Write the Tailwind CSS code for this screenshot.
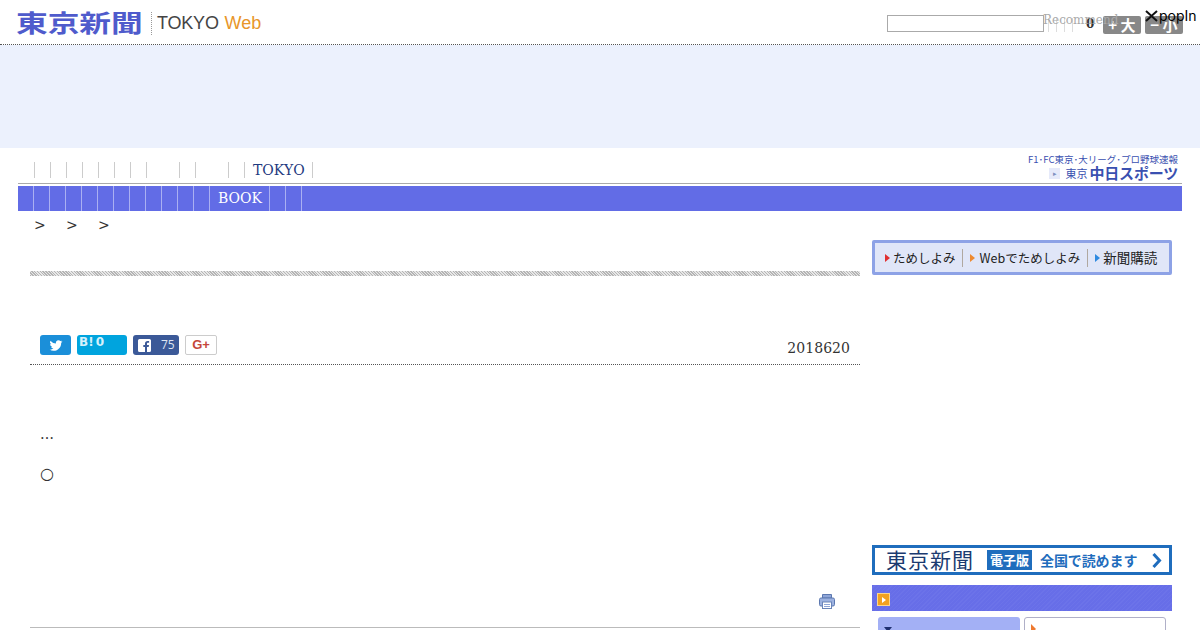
<!DOCTYPE html>
<html lang="ja">
<head>
<meta charset="UTF-8" />
<title>東京新聞 TOKYO Web</title>
<script src="https://cdn.jsdelivr.net/npm/@tailwindcss/browser@4"></script>
</head>
<body class="relative h-[630px] w-[1200px] overflow-hidden bg-white font-['DejaVu_Serif','Noto_Sans_CJK_JP',serif] text-sm text-[#333]">

<!-- Header -->
<header class="flex h-[45px] items-start border-b border-dotted border-[#555] pl-4">
  <div class="mt-[7px] w-[127px] shrink-0 origin-left scale-x-[1.32] whitespace-nowrap font-['Noto_Sans_CJK_JP',sans-serif] text-[24px] font-bold leading-[30px] text-[#4f5bcc]">東京新聞</div>
  <div class="mt-[12px] ml-2 h-[23px] border-l border-dotted border-[#999]"></div>
  <div class="mt-[11px] ml-[5px] whitespace-nowrap font-['Liberation_Sans',sans-serif] text-[18px] leading-[24px] tracking-[-0.2px] text-[#444]">TOKYO <span class="ml-[1px] tracking-[0px] text-[#e8962a]">Web</span></div>
  <div class="ml-auto mt-[15px] mr-[17px] flex items-start">
    <div class="h-[17px] w-[157px] border border-[#aaa] bg-white"></div>
    <div class="ml-[4px] mt-[3px] flex h-[14px] w-[37px] gap-[7px]">
      <i class="border-l border-[#ddd]"></i><i class="border-l border-[#ddd]"></i><i class="border-l border-[#ddd]"></i><i class="border-l border-[#ddd]"></i>
    </div>
    <div class="ml-[1px] mt-[1px] w-[17px] text-[12px] font-bold leading-[16px] text-[#333]">0</div>
    <div class="mt-[1px] flex h-[18px] w-[38px] items-center justify-center rounded-[2px] bg-[#888] font-['Noto_Sans_CJK_JP',sans-serif] text-[15px] font-bold text-white">+ 大</div>
    <div class="ml-1 mt-[1px] flex h-[18px] w-[38px] items-center justify-center rounded-[2px] bg-[#888] font-['Noto_Sans_CJK_JP',sans-serif] text-[15px] font-bold text-white">− 小</div>
  </div>
</header>

<!-- overlays from the recommend widget -->
<div class="absolute left-[1043px] top-[13px] text-[12px] leading-[15px] text-[#aaa]">Recommend</div>
<div class="absolute left-[1145px] top-[7px] flex items-center gap-[1px] font-['Inter',sans-serif] text-[14px] leading-[17px] text-black">
  <svg class="h-[12px] w-[13px]" viewBox="0 0 13 12" fill="none" stroke="#111" stroke-width="2"><path d="M1 1l5.500 5 5.500-5M1 11l5.500-5 5.500 5" /></svg>
  <span>popIn</span>
</div>

<!-- Ad band -->
<div class="h-[103px] bg-[#ecf1fd]"></div>

<!-- Global nav -->
<div class="ml-[18px] mr-[18px]">
  <div class="flex h-[36px] items-start justify-between border-b border-[#aaa]">
    <ul class="mt-[14px] ml-[16px] flex h-[16px] border-r border-[#ccc] text-[#1f3a80]">
      <li class="w-[16px] border-l border-[#ccc]"></li>
      <li class="w-[16px] border-l border-[#ccc]"></li>
      <li class="w-[16px] border-l border-[#ccc]"></li>
      <li class="w-[16px] border-l border-[#ccc]"></li>
      <li class="w-[16px] border-l border-[#ccc]"></li>
      <li class="w-[16px] border-l border-[#ccc]"></li>
      <li class="w-[16px] border-l border-[#ccc]"></li>
      <li class="w-[33px] border-l border-[#ccc]"></li>
      <li class="w-[16px] border-l border-[#ccc]"></li>
      <li class="w-[33px] border-l border-[#ccc]"></li>
      <li class="w-[16px] border-l border-[#ccc]"></li>
      <li class="w-[68px] border-l border-[#ccc] pl-[8px] leading-[16px]">TOKYO</li>
    </ul>
    <div class="mr-[4px] mt-[5px] flex flex-col items-end font-['Noto_Sans_CJK_JP',sans-serif] text-[#3a50b0]">
      <div class="whitespace-nowrap text-[9.500px] leading-[13px]">F1･FC東京･大リーグ･プロ野球速報</div>
      <div class="flex items-center whitespace-nowrap leading-[14px]">
        <span class="mr-[5px] flex h-[11px] w-[11px] items-center justify-center bg-[#e6eafa] text-[7px] text-[#8090c0]">▸</span>
        <span class="mr-[2px] text-[11px]">東京</span>
        <span class="text-[15px] font-bold tracking-[-0.2px]">中日スポーツ</span>
      </div>
    </div>
  </div>
  <ul class="mt-[2px] flex h-[25px] bg-[#626ce6] pl-[15px] text-white">
    <li class="w-[16px] border-l border-[#aab0f2]"></li>
    <li class="w-[16px] border-l border-[#aab0f2]"></li>
    <li class="w-[16px] border-l border-[#aab0f2]"></li>
    <li class="w-[16px] border-l border-[#aab0f2]"></li>
    <li class="w-[16px] border-l border-[#aab0f2]"></li>
    <li class="w-[16px] border-l border-[#aab0f2]"></li>
    <li class="w-[16px] border-l border-[#aab0f2]"></li>
    <li class="w-[16px] border-l border-[#aab0f2]"></li>
    <li class="w-[16px] border-l border-[#aab0f2]"></li>
    <li class="w-[16px] border-l border-[#aab0f2]"></li>
    <li class="w-[16px] border-l border-[#aab0f2]"></li>
    <li class="w-[60px] border-l border-[#aab0f2] pl-[8px] leading-[24px]">BOOK</li>
    <li class="w-[16px] border-l border-[#aab0f2]"></li>
    <li class="w-[16px] border-l border-[#aab0f2]"></li>
    <li class="w-[16px] border-l border-[#aab0f2]"></li>
  </ul>
</div>

<!-- Breadcrumb -->
<div class="ml-[34px] mt-[5px] flex h-[18px] gap-[20.270px] leading-[18px] text-[#333]">
  <span>&gt;</span><span>&gt;</span><span>&gt;</span>
</div>

<!-- Main -->
<div class="mx-[30px] mt-[6px] flex w-[1142px] justify-between">
  <main class="w-[830px]">
    <div class="mt-[31px] h-[5px] bg-[repeating-linear-gradient(45deg,#b4b4b4_0,#b4b4b4_1px,#e8e8e8_1px,#e8e8e8_2px)]"></div>
    <div class="mt-[59px] flex h-[30px] items-start justify-between border-b border-dotted border-[#555] pl-[10px] pr-[10px]">
      <div class="flex gap-[6px]">
        <div class="flex h-[20px] w-[31px] items-center justify-center rounded-[3px] bg-[#1b8fd9]">
          <svg class="h-[13px] w-[14px]" viewBox="0 0 24 24" fill="#fff"><path d="M23.950 4.570a10 10 0 0 1-2.820.770 4.960 4.960 0 0 0 2.160-2.720 9.900 9.900 0 0 1-3.120 1.180 4.920 4.920 0 0 0-8.380 4.480A13.940 13.940 0 0 1 1.640 3.160a4.920 4.920 0 0 0 1.520 6.570 4.900 4.900 0 0 1-2.230-.620v.060a4.920 4.920 0 0 0 3.950 4.830 4.900 4.900 0 0 1-2.220.080 4.930 4.930 0 0 0 4.600 3.420A9.870 9.870 0 0 1 0 19.540a13.940 13.940 0 0 0 7.550 2.210c9.050 0 14-7.500 14-13.980 0-.210 0-.420-.020-.630a9.930 9.930 0 0 0 2.460-2.550z"/></svg>
        </div>
        <div class="h-[20px] w-[50px] rounded-[3px] bg-[#00a4de] pl-[2px] font-['DejaVu_Sans',sans-serif] text-[12px] font-bold leading-[14px] text-[#d5f1fb]">B!<span class="ml-[2px]">0</span></div>
        <div class="flex h-[20px] w-[46px] items-center rounded-[3px] bg-[#3b5998] pl-[5px] font-['Open_Sans',sans-serif] text-[12px] text-[#dfe5f2]">
          <svg class="h-[13px] w-[13px] shrink-0" viewBox="0 0 13 13"><path fill="#fff" d="M1.500 0h10A1.500 1.500 0 0 1 13 1.500v10a1.500 1.500 0 0 1-1.500 1.500H9V8h1.700l.3-2H9V4.800c0-.600.300-1 1-1h1.100V2.100C10.700 2 10.100 2 9.500 2 8 2 7 3 7 4.500V6H5.300v2H7v5H1.500A1.500 1.500 0 0 1 0 11.500v-10A1.500 1.500 0 0 1 1.500 0z"/></svg>
          <span class="ml-[10px]">75</span>
        </div>
        <div class="flex h-[20px] w-[32px] items-center justify-center rounded-[2px] border border-[#ccc] bg-white font-['Liberation_Sans',sans-serif] text-[13px] font-bold text-[#c5473a]">G+</div>
      </div>
      <div class="mt-[4px] tracking-[0.05px] leading-[18px] text-[#333]">2018620</div>
    </div>
    <p class="ml-[10px] mt-[59px] h-[20px] leading-[20px] text-[#333]">…</p>
    <p class="ml-[10px] mt-[20px] h-[20px] text-[16px] leading-[20px] text-[#333]">○</p>
    <div class="mt-[110px] flex justify-end pr-[25px]">
      <svg class="h-[15px] w-[16px]" viewBox="0 0 16 15">
        <path fill="#8fa6d8" stroke="#5c78b0" d="M3.500.500h9V4h-9z"/>
        <rect x=".5" y="4" width="15" height="8" rx="1.500" fill="#9db2e0" stroke="#5c78b0"/>
        <rect x="3.500" y="8" width="9" height="6.500" fill="#fff" stroke="#6a84b8"/>
        <path stroke="#8fa6d8" d="M5 10.500h6M5 12.500h6"/>
      </svg>
    </div>
    <div class="mt-[18px] border-t border-[#bbb]"></div>
  </main>

  <aside class="w-[300px]">
    <div class="flex h-[35px] items-center whitespace-nowrap rounded-[2px] border-[3px] border-[#8da2e6] bg-[#e0e6f8] pl-[10px] font-['Noto_Sans_CJK_JP',sans-serif] text-[12.500px] text-[#222]">
      <span class="mr-[3px] border-y-[4px] border-l-[5px] border-y-transparent border-l-[#e03030]"></span>ためしよみ
      <i class="ml-[6px] mr-[7px] h-[18px] border-l border-[#b0a8a0]"></i>
      <span class="mr-[5px] border-y-[4px] border-l-[5px] border-y-transparent border-l-[#ee8a30]"></span>Webでためしよみ
      <i class="ml-[7px] mr-[7px] h-[18px] border-l border-[#b0a8a0]"></i>
      <span class="mr-[3px] border-y-[4px] border-l-[5px] border-y-transparent border-l-[#2f8ae0]"></span><span class="text-[13.500px]">新聞購読</span>
    </div>
    <div class="mt-[270px] flex h-[30px] items-center border-[3px] border-[#1f6dbd] bg-white pl-[11px] whitespace-nowrap">
      <span class="mb-[3px] w-[101px] font-['Noto_Sans_CJK_JP',serif] text-[21px] leading-[24px] tracking-[1px] text-[#1b3a70]">東京新聞</span>
      <span class="flex h-[20px] w-[45px] items-center justify-center bg-[#1f6dbd] font-['Noto_Sans_CJK_JP',sans-serif] text-[13px] font-bold text-white">電子版</span>
      <span class="ml-[8px] font-['Noto_Sans_CJK_JP',sans-serif] text-[14px] font-bold tracking-[-0.1px] text-[#1f6dbd]">全国で読めます</span>
      <svg class="ml-[15px] h-[15px] w-[10px]" viewBox="0 0 10 15" fill="none" stroke="#1f6dbd" stroke-width="3"><path d="M1.500 1l6 6.500-6 6.500"/></svg>
    </div>
    <div class="mt-[10px] flex h-[26px] items-end bg-[repeating-linear-gradient(135deg,#676ee8_0,#676ee8_2px,#6c73e9_2px,#6c73e9_3px)] pb-[5px] pl-[5px]">
      <div class="flex h-[13px] w-[13px] items-center justify-center border border-[#fbd58a] bg-[#f2a11f]">
        <span class="border-y-[3px] border-l-[4px] border-y-transparent border-l-white"></span>
      </div>
    </div>
    <div class="mt-[6px] flex gap-[4px] px-[6px]">
      <div class="h-[30px] w-[142px] rounded-t-[3px] bg-[#a3b0f5] pl-[6px] pt-[10px]">
        <div class="h-0 w-0 border-x-[4px] border-t-[5px] border-x-transparent border-t-[#1f2f70]"></div>
      </div>
      <div class="h-[30px] w-[142px] rounded-t-[3px] border border-[#b0b0c8] bg-white pl-[6px] pt-[6px]">
        <div class="h-0 w-0 border-y-[5px] border-l-[5px] border-y-transparent border-l-[#ee7a30]"></div>
      </div>
    </div>
  </aside>
</div>

</body>
</html>
